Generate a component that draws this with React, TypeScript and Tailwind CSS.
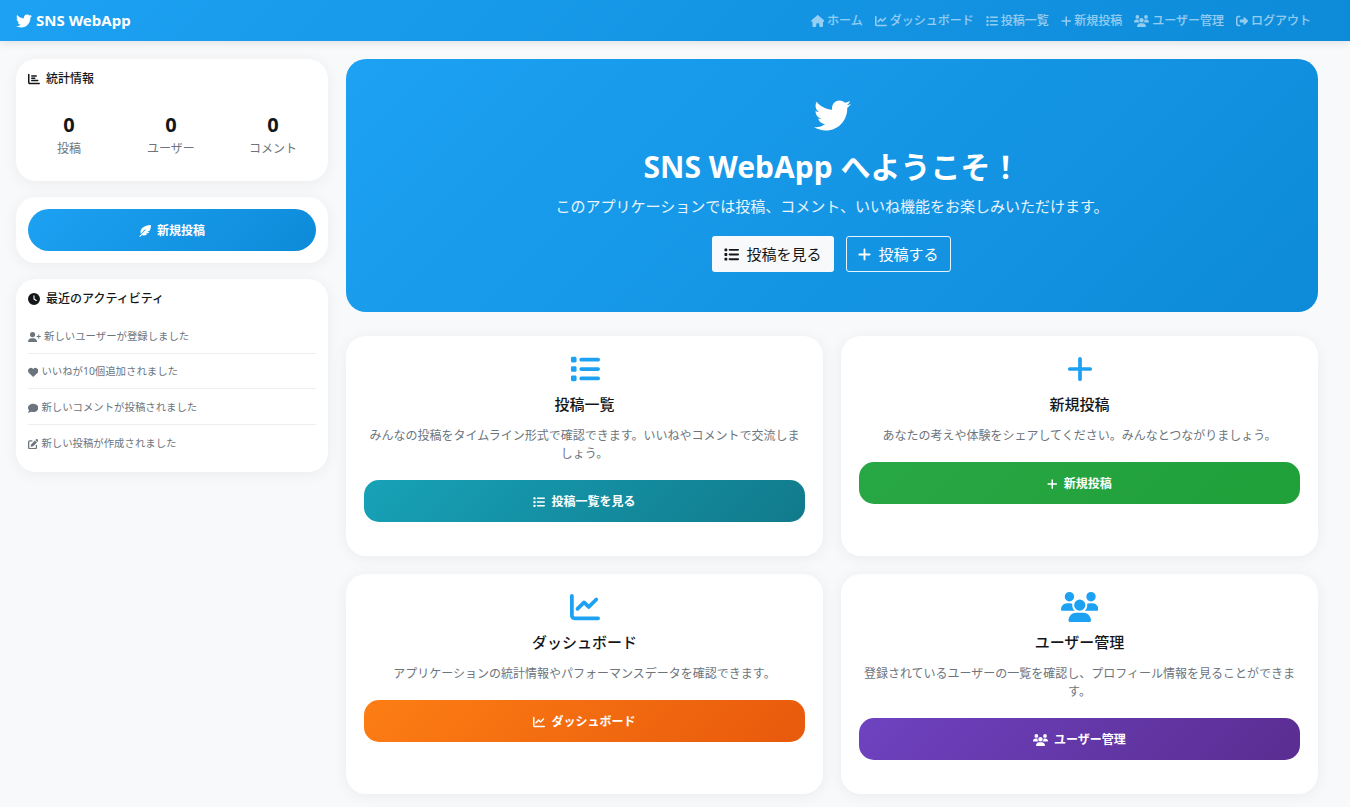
import type { ComponentType, ReactNode } from "react";
import {
  FaChartBar,
  FaChartLine,
  FaClock,
  FaComment,
  FaFeatherPointed,
  FaHeart,
  FaHouse,
  FaList,
  FaPenToSquare,
  FaPlus,
  FaRightFromBracket,
  FaTwitter,
  FaUserPlus,
  FaUsers,
} from "react-icons/fa6";

const navLinks = [
  { icon: FaHouse, size: "h-[12px] w-[13.5px]", label: "ホーム" },
  { icon: FaChartLine, size: "h-[12px] w-[12px]", label: "ダッシュボード" },
  { icon: FaList, size: "h-[12px] w-[12px]", label: "投稿一覧" },
  { icon: FaPlus, size: "h-[12px] w-[10.5px]", label: "新規投稿" },
  { icon: FaUsers, size: "h-[12px] w-[15px]", label: "ユーザー管理" },
  { icon: FaRightFromBracket, size: "h-[12px] w-[12px]", label: "ログアウト" },
];

const stats = [
  { value: 0, label: "投稿" },
  { value: 0, label: "ユーザー" },
  { value: 0, label: "コメント" },
];

const activities = [
  { icon: FaUserPlus, size: "h-[10.4px] w-[13px]", label: "新しいユーザーが登録しました" },
  { icon: FaHeart, size: "h-[10.4px] w-[10.4px]", label: "いいねが10個追加されました" },
  { icon: FaComment, size: "h-[10.4px] w-[10.4px]", label: "新しいコメントが投稿されました" },
  { icon: FaPenToSquare, size: "h-[10.4px] w-[10.4px]", label: "新しい投稿が作成されました" },
];

const features = [
  {
    icon: FaList,
    big: "h-[30px] w-[30px]",
    small: "h-[12px] w-[12px]",
    title: "投稿一覧",
    text: "みんなの投稿をタイムライン形式で確認できます。いいねやコメントで交流しましょう。",
    button: "投稿一覧を見る",
    color: "bg-[linear-gradient(135deg,#17a2b8,#117a8b)]",
  },
  {
    icon: FaPlus,
    big: "h-[30px] w-[26px]",
    small: "h-[12px] w-[10.5px]",
    title: "新規投稿",
    text: "あなたの考えや体験をシェアしてください。みんなとつながりましょう。",
    button: "新規投稿",
    color: "bg-[linear-gradient(135deg,#28a745,#20a039)]",
  },
  {
    icon: FaChartLine,
    big: "h-[30px] w-[30px]",
    small: "h-[12px] w-[12px]",
    title: "ダッシュボード",
    text: "アプリケーションの統計情報やパフォーマンスデータを確認できます。",
    button: "ダッシュボード",
    color: "bg-[linear-gradient(135deg,#fd7e14,#e8590c)]",
  },
  {
    icon: FaUsers,
    big: "h-[30px] w-[37.5px]",
    small: "h-[12px] w-[15px]",
    title: "ユーザー管理",
    text: "登録されているユーザーの一覧を確認し、プロフィール情報を見ることができます。",
    button: "ユーザー管理",
    color: "bg-[linear-gradient(135deg,#6f42c1,#5a2d91)]",
  },
];

function SideCard({ children }: { children: ReactNode }) {
  return <div className="rounded-[20px] bg-white p-3 shadow-[0_2px_15px_rgba(0,0,0,0.06)]">{children}</div>;
}

function FeatureCard({
  icon: Icon,
  big,
  small,
  title,
  text,
  button,
  color,
}: {
  icon: ComponentType<{ className?: string }>;
  big: string;
  small: string;
  title: string;
  text: string;
  button: string;
  color: string;
}) {
  return (
    <div className="h-[220px] rounded-[20px] bg-white px-[18px] pt-[18px] text-center shadow-[0_2px_15px_rgba(0,0,0,0.06)]">
      <div className="flex h-[30px] justify-center text-[#1da1f2]">
        <Icon className={big} />
      </div>
      <h5 className="mt-[10px] text-[15px] leading-[20px] font-medium text-[#14171a]">{title}</h5>
      <p className="mt-[13px] text-[12px] leading-[18px] text-[#6c757d]">{text}</p>
      <a className={`mt-[17px] flex h-[42px] items-center justify-center gap-[6px] rounded-[15px] pt-[2px] text-[12px] font-bold text-white ${color}`}>
        <Icon className={small} />
        {button}
      </a>
    </div>
  );
}

export default function App() {
  return (
    <div className="min-h-[807px] bg-[#f8f9fa] pb-[13px] font-['Noto_Sans','Noto_Sans_CJK_JP',sans-serif] text-[#14171a]">
      <nav className="flex h-[41px] items-center justify-between bg-[linear-gradient(135deg,#1da1f2,#0d8bd9)] pr-[39px] pl-4 shadow-[0_2px_8px_rgba(0,0,0,0.1)]">
        <a className="flex items-center gap-[4px] text-[15px] font-bold text-white">
          <FaTwitter className="h-[16px] w-[16px]" />
          SNS WebApp
        </a>
        <div className="flex items-center gap-3">
          {navLinks.map(({ icon: Icon, size, label }) => (
            <a key={label} className="flex items-center gap-[3px] text-[12px] font-medium text-white/55">
              <Icon className={size} />
              {label}
            </a>
          ))}
        </div>
      </nav>

      <div className="mt-[18px] grid grid-cols-[312px_972px] gap-[18px] pl-4">
        <aside className="flex flex-col gap-4 self-start">
          <SideCard>
            <h6 className="flex h-[15px] items-center gap-[6px] text-[12px] font-medium">
              <FaChartBar className="h-[12px] w-[12px]" />
              統計情報
            </h6>
            <div className="mt-[27px] mb-[12px] grid translate-x-[-1px] grid-cols-3 gap-[18px] text-center">
              {stats.map((s) => (
                <div key={s.label} className="flex flex-col items-center">
                  <span className="text-[20px] leading-[24px] font-bold">{s.value}</span>
                  <span className="mt-[3px] text-[12px] leading-[17px] text-[#6c757d]">{s.label}</span>
                </div>
              ))}
            </div>
          </SideCard>

          <SideCard>
            <a className="flex h-[42px] items-center justify-center gap-[6px] rounded-full bg-[linear-gradient(135deg,#1da1f2,#0d8bd9)] pt-[2px] text-[12px] font-bold text-white">
              <FaFeatherPointed className="h-[12px] w-[12px]" />
              新規投稿
            </a>
          </SideCard>

          <SideCard>
            <h6 className="flex h-[15px] items-center gap-[6px] text-[12px] font-medium">
              <FaClock className="h-[12px] w-[12px]" />
              最近のアクティビティ
            </h6>
            <ul className="mt-[12px]">
              {activities.map(({ icon: Icon, size, label }, i) => (
                <li
                  key={label}
                  className={`flex h-[35.5px] items-center gap-[3px] pt-[3px] text-[10.4px] text-[#6c757d] ${i < activities.length - 1 ? "border-b border-[#eeeeee]" : ""}`}
                >
                  <Icon className={size} />
                  {label}
                </li>
              ))}
            </ul>
          </SideCard>
        </aside>

        <main>
          <section className="flex h-[253px] flex-col items-center rounded-[20px] bg-[linear-gradient(135deg,#1da1f2,#0d8bd9)] pt-[38px] text-white">
            <FaTwitter className="h-[37px] w-[37px]" />
            <h1 className="mt-[13px] text-[30px] leading-[40px] font-bold">SNS WebApp へようこそ！</h1>
            <p className="mt-[8px] text-[15px] leading-[22px] text-white/90">
              このアプリケーションでは投稿、コメント、いいね機能をお楽しみいただけます。
            </p>
            <div className="mt-[19px] mr-px flex gap-3">
              <a className="flex h-9 w-[122px] items-center justify-center gap-[7px] rounded-[3px] bg-[#f8f9fa] text-[15px] text-[#14171a]">
                <FaList className="h-[15px] w-[15px]" />
                投稿を見る
              </a>
              <a className="flex h-9 w-[105px] items-center justify-center gap-[7px] rounded-[3px] border border-white/90 text-[15px] text-white">
                <FaPlus className="h-[15px] w-[13px]" />
                投稿する
              </a>
            </div>
          </section>

          <div className="mt-6 grid grid-cols-2 gap-[18px]">
            {features.map((f) => (
              <FeatureCard key={f.title} {...f} />
            ))}
          </div>
        </main>
      </div>
    </div>
  );
}
